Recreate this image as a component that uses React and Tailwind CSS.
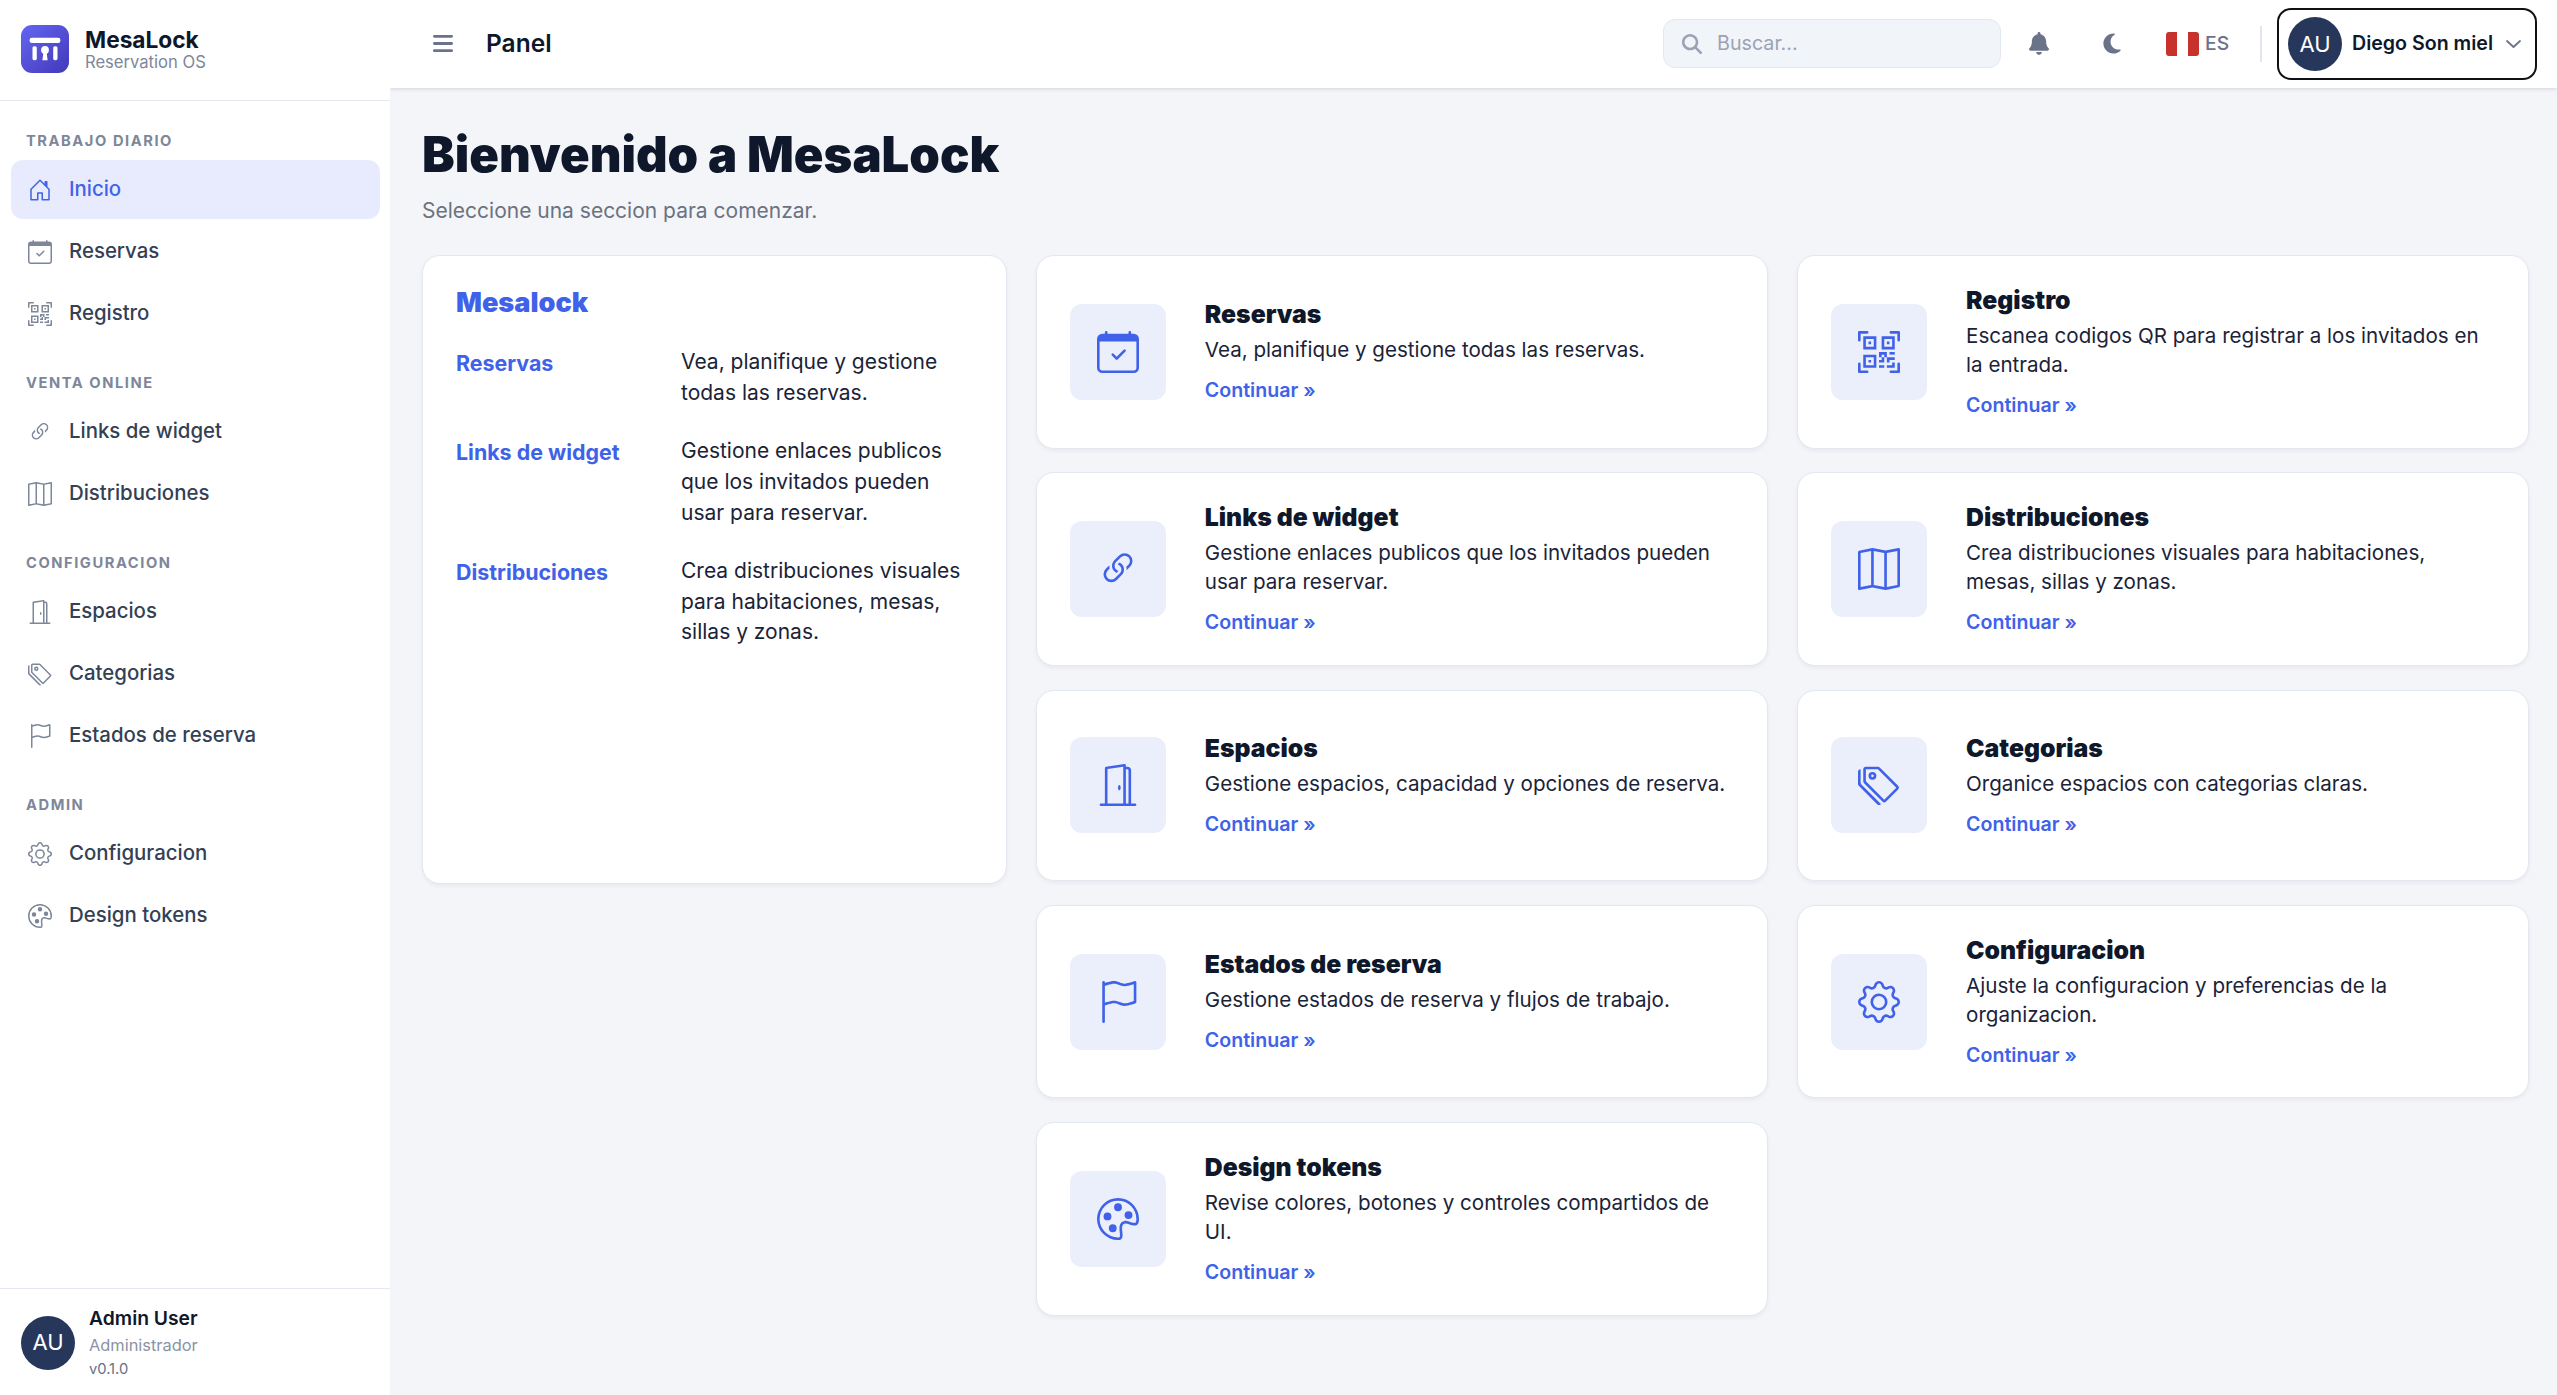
import React from "react"
import {
  BsHouseDoor,
  BsCalendarCheck,
  BsQrCodeScan,
  BsLink45Deg,
  BsMap,
  BsDoorOpen,
  BsTags,
  BsFlag,
  BsGear,
  BsPalette,
} from "react-icons/bs"
import { FaBars, FaBell, FaMagnifyingGlass, FaMoon } from "react-icons/fa6"

const navGroups = [
  {
    title: "TRABAJO DIARIO",
    items: [
      { label: "Inicio", icon: BsHouseDoor, active: true },
      { label: "Reservas", icon: BsCalendarCheck },
      { label: "Registro", icon: BsQrCodeScan },
    ],
  },
  {
    title: "VENTA ONLINE",
    items: [
      { label: "Links de widget", icon: BsLink45Deg },
      { label: "Distribuciones", icon: BsMap },
    ],
  },
  {
    title: "CONFIGURACION",
    items: [
      { label: "Espacios", icon: BsDoorOpen },
      { label: "Categorias", icon: BsTags },
      { label: "Estados de reserva", icon: BsFlag },
    ],
  },
  {
    title: "ADMIN",
    items: [
      { label: "Configuracion", icon: BsGear },
      { label: "Design tokens", icon: BsPalette },
    ],
  },
]

const summary = [
  { label: "Reservas", text: "Vea, planifique y gestione todas las reservas." },
  { label: "Links de widget", text: "Gestione enlaces publicos que los invitados pueden usar para reservar." },
  { label: "Distribuciones", text: "Crea distribuciones visuales para habitaciones, mesas, sillas y zonas." },
]

const cards = [
  { title: "Reservas", text: "Vea, planifique y gestione todas las reservas.", icon: BsCalendarCheck },
  { title: "Registro", text: "Escanea codigos QR para registrar a los invitados en la entrada.", icon: BsQrCodeScan },
  { title: "Links de widget", text: "Gestione enlaces publicos que los invitados pueden usar para reservar.", icon: BsLink45Deg },
  { title: "Distribuciones", text: "Crea distribuciones visuales para habitaciones, mesas, sillas y zonas.", icon: BsMap },
  { title: "Espacios", text: "Gestione espacios, capacidad y opciones de reserva.", icon: BsDoorOpen },
  { title: "Categorias", text: "Organice espacios con categorias claras.", icon: BsTags },
  { title: "Estados de reserva", text: "Gestione estados de reserva y flujos de trabajo.", icon: BsFlag },
  { title: "Configuracion", text: "Ajuste la configuracion y preferencias de la organizacion.", icon: BsGear },
  { title: "Design tokens", text: "Revise colores, botones y controles compartidos de UI.", icon: BsPalette },
]

function Logo() {
  return (
    <svg className="size-12 shrink-0" viewBox="0 0 48 48">
      <defs>
        <linearGradient id="logo-bg" x1="0" y1="0" x2="1" y2="1">
          <stop offset="0" stopColor="#6366f1" />
          <stop offset="1" stopColor="#4338ba" />
        </linearGradient>
      </defs>
      <rect width="48" height="48" rx="11" fill="url(#logo-bg)" />
      <rect x="8.6" y="12.7" width="30.8" height="5.3" rx="2.2" fill="#fff" />
      <rect x="11.5" y="21.2" width="4.3" height="14" rx="1.6" fill="#fff" />
      <rect x="32.2" y="21.2" width="4.3" height="14" rx="1.6" fill="#fff" />
      <circle cx="24" cy="25" r="3.9" fill="#fff" />
      <path d="M22.6 26h2.8l1.2 9.2h-5.2z" fill="#fff" />
    </svg>
  )
}

function Avatar() {
  return (
    <div className="flex size-[54px] shrink-0 items-center justify-center rounded-full bg-[#26375b] text-[22px] text-white">
      AU
    </div>
  )
}

function Sidebar() {
  return (
    <aside className="relative z-20 flex w-[390px] shrink-0 flex-col bg-white">
      <div className="flex h-[101px] items-start gap-4 border-b border-[#e4e8f1] pt-[25px] pl-[21px]">
        <Logo />
        <div className="pt-[3px]">
          <div className="text-[22.7px] leading-6 font-bold text-[#0f172a]">MesaLock</div>
          <div className="text-[16.6px] leading-5 text-[#7d8799]">Reservation OS</div>
        </div>
      </div>

      <nav className="flex-1 pt-[29px] pr-[10px] pl-[11px]">
        {navGroups.map((group) => (
          <div key={group.title} className="mb-[29px]">
            <div className="mb-2 pl-[15px] text-[14.7px] leading-[22px] font-bold tracking-[1.55px] text-[#7d8799]">
              {group.title}
            </div>
            <div className="flex flex-col gap-[3px]">
              {group.items.map((item) => (
                <a
                  key={item.label}
                  className={
                    item.active
                      ? "flex h-[59px] items-center gap-[17px] rounded-xl bg-[#e8ebfd] pl-[17px] text-[20.4px] font-medium text-[#4062e8]"
                      : "flex h-[59px] items-center gap-[17px] rounded-xl pl-[17px] text-[20.4px] font-medium text-[#344054]"
                  }
                >
                  <item.icon className={item.active ? "size-6" : "size-6 text-[#7d8799]"} />
                  {item.label}
                </a>
              ))}
            </div>
          </div>
        ))}
      </nav>

      <div className="flex h-[107px] items-center gap-[14px] border-t border-[#e4e8f1] pt-px pl-[21px]">
        <Avatar />
        <div>
          <div className="text-[19.3px] leading-[29px] font-semibold text-[#0f172a]">Admin User</div>
          <div className="text-[16.4px] leading-6 text-[#8a93a5]">Administrador</div>
          <div className="text-[14.7px] leading-6 text-[#667085]">v0.1.0</div>
        </div>
      </div>
    </aside>
  )
}

function Topbar() {
  return (
    <header className="z-10 flex h-[88px] shrink-0 items-center bg-white pr-[20px] pb-px pl-[43px] text-[#6b7389] shadow-[0_1px_4px_rgba(15,23,42,0.14)]">
      <FaBars className="h-[23px] w-5" />
      <h2 className="ml-[33px] text-[24.5px] font-semibold text-[#0f172a]">Panel</h2>

      <div className="ml-auto flex h-[49px] w-[338px] items-center rounded-xl border border-[#e2e8f0] bg-[#f1f4f9] pl-[18px] text-[#9aa3b5]">
        <FaMagnifyingGlass className="size-5" />
        <span className="ml-[15px] text-[19.7px]">Buscar...</span>
      </div>
      <FaBell className="ml-7 h-[23px] w-5" />
      <FaMoon className="ml-[53px] h-[23px] w-5" />
      <div className="ml-[44px] flex h-6 w-[33px] overflow-hidden rounded-[3px]">
        <span className="flex-1 bg-[#c8322d]" />
        <span className="flex-1 bg-white" />
        <span className="flex-1 bg-[#c8322d]" />
      </div>
      <span className="ml-[6px] w-[25px] text-[19.3px] font-medium">ES</span>
      <div className="ml-[30px] h-9 w-[2px] bg-[#e0e5ee]" />
      <button className="ml-[15px] flex h-[72px] w-[260px] items-center rounded-[14px] border-[2.5px] border-[#101114] pt-px pl-[9px]">
        <Avatar />
        <span className="ml-[10px] w-[144px] text-left text-[19.6px] font-semibold whitespace-nowrap text-[#0f172a]">
          Diego Son miel
        </span>
        <svg className="ml-[10px] h-2 w-[15px]" viewBox="0 0 15 8" fill="none" stroke="currentColor" strokeWidth="1.8" strokeLinecap="round" strokeLinejoin="round">
          <path d="M1 1l6.5 6L14 1" />
        </svg>
      </button>
    </header>
  )
}

function SummaryPanel() {
  return (
    <section className="row-span-5 h-[629px] self-start rounded-[18px] border border-[#e2e7f0] bg-white px-[33px] pt-8 shadow-[0_2px_4px_rgba(15,23,42,0.05)]">
      <h3 className="mb-[29px] text-[27.1px] leading-[30.4px] font-black text-[#4062e8]">Mesalock</h3>
      <div className="flex flex-col gap-[27.2px]">
        {summary.map((row) => (
          <div key={row.label} className="grid grid-cols-[225px_1fr] leading-[30.8px]">
            <div className="pt-px text-[21.4px] font-bold text-[#4062e8]">{row.label}</div>
            <p className="text-[21px] leading-[30.8px] text-[#1a2338]">{row.text}</p>
          </div>
        ))}
      </div>
    </section>
  )
}

function SectionCard({ title, text, icon: Icon }) {
  return (
    <article className="flex min-h-[191.6px] items-center gap-[39px] rounded-[18px] border border-[#e2e7f0] bg-white px-[33px] py-[28.8px] shadow-[0_2px_4px_rgba(15,23,42,0.05)]">
      <div className="flex size-24 shrink-0 items-center justify-center rounded-xl bg-[#ebeffc] text-[#4062e8]">
        <Icon className="size-[42px]" />
      </div>
      <div className="min-w-0">
        <h3 className="mb-[6px] text-[24.75px] leading-[30px] font-black text-[#0f172a]">{title}</h3>
        <p className="text-[20.6px] leading-[29px] text-[#1a2338]">{text}</p>
        <a className="mt-[13px] block text-[19.6px] leading-[27px] font-semibold text-[#4062e8]">Continuar »</a>
      </div>
    </article>
  )
}

export default function App() {
  return (
    <div className="flex h-screen overflow-hidden bg-[#f3f5f9] font-[Inter,sans-serif]">
      <Sidebar />
      <div className="flex min-w-0 flex-1 flex-col">
        <Topbar />
        <main className="flex-1 pt-[37px] pr-7 pl-8">
          <h1 className="text-[49px] leading-[60px] font-black text-[#0f172a]">Bienvenido a MesaLock</h1>
          <p className="mt-[11px] mb-[29px] text-[21px] leading-[30px] text-[#6b7280]">
            Seleccione una seccion para comenzar.
          </p>
          <div className="grid grid-cols-[584.5px_1fr_1fr] gap-x-[29.3px] gap-y-[23.7px]">
            <SummaryPanel />
            {cards.map((card) => (
              <SectionCard key={card.title} {...card} />
            ))}
          </div>
        </main>
      </div>
    </div>
  )
}
